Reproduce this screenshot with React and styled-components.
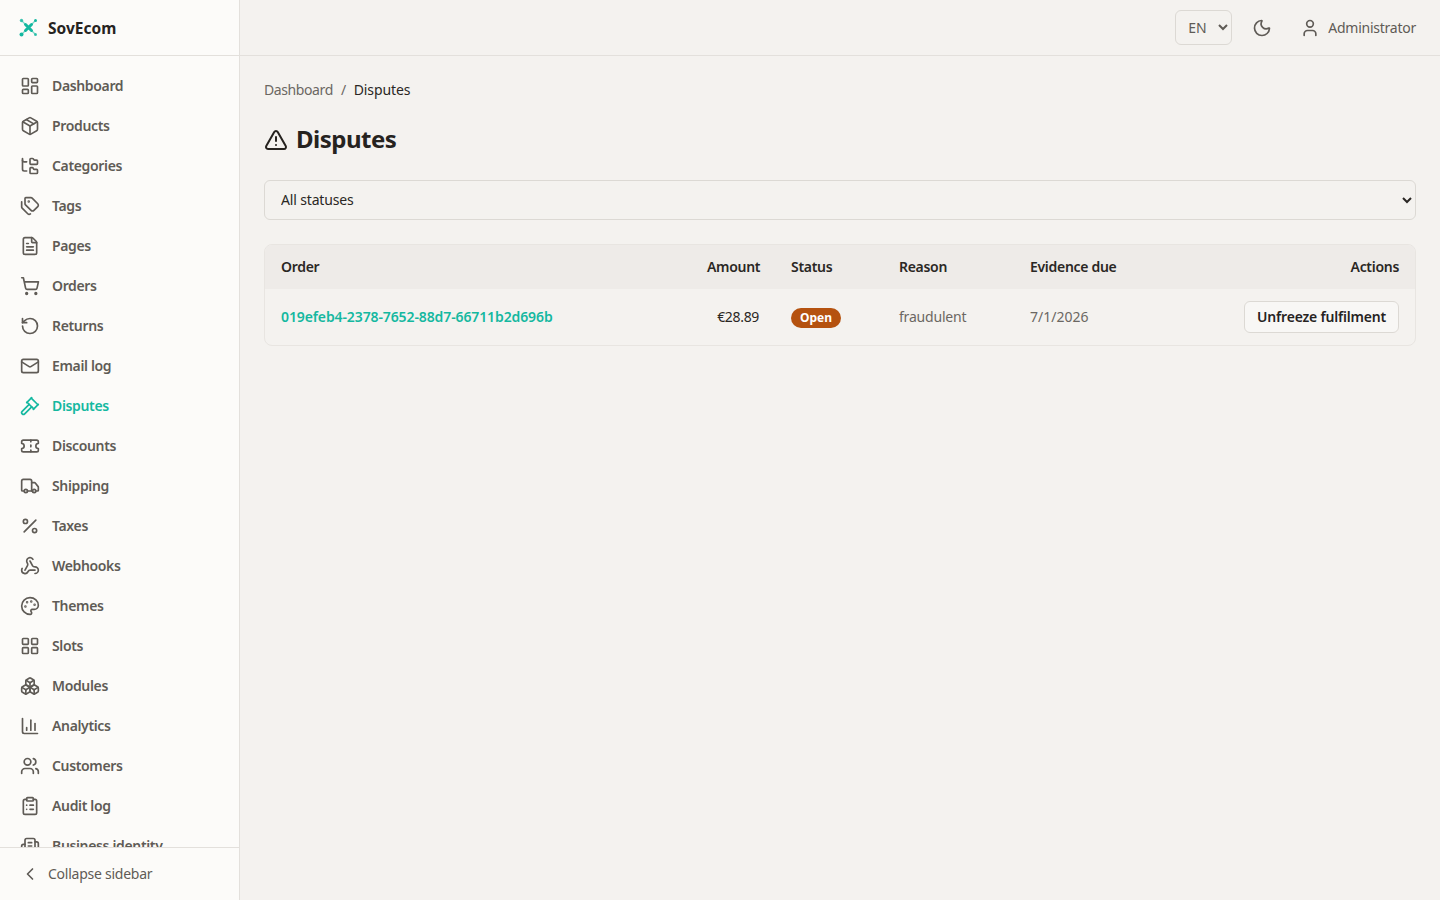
import React from 'react';
import styled, { createGlobalStyle } from 'styled-components';
import {
  LayoutDashboard, Package, FolderTree, Tags, FileText, ShoppingCart, RotateCcw, Mail, Gavel,
  Ticket, Truck, Percent, Webhook, Palette, LayoutGrid, Boxes, ChartColumn, Users,
  ClipboardList, Building2, ChevronLeft, Moon, User, TriangleAlert,
} from 'lucide-react';

const Global = createGlobalStyle`
  html, body { margin: 0; padding: 0; height: 100%; }
  body { font-family: "Noto Sans", "Open Sans", sans-serif; background: #f4f2ef; color: #2a2724; }
  * { box-sizing: border-box; }
`;

const Shell = styled.div`
  display: flex;
  height: 900px;
  overflow: hidden;
`;
const Sidebar = styled.aside`
  width: 240px;
  flex: none;
  display: flex;
  flex-direction: column;
  background: #fcfbf9;
  border-right: 1px solid #e3e0dc;
`;
const Brand = styled.div`
  height: 56px;
  flex: none;
  display: flex;
  align-items: center;
  gap: 10px;
  padding: 0 19px;
  border-bottom: 1px solid #e3e0dc;
  font-size: 15.5px;
  font-weight: 700;
  color: #26231f;
`;
const Nav = styled.nav`
  flex: 1;
  min-height: 0;
  overflow: hidden;
  padding: 10px 8px 0;
  display: flex;
  flex-direction: column;
`;
const NavItem = styled.a`
  height: 40px;
  flex: none;
  display: flex;
  align-items: center;
  gap: 12px;
  padding-left: 12px;
  font-size: 14px;
  font-weight: 600;
  letter-spacing: -0.35px;
  color: ${p => (p.$active ? '#14b8a0' : '#5f5b56')};
`;
const RaisedLabel = styled.span`
  margin-bottom: 2px;
`;
const TitleText = styled.span`
  margin-bottom: 3px;
`;
const Footer = styled.button`
  height: 53px;
  flex: none;
  display: flex;
  align-items: center;
  gap: 8px;
  padding: 0 0 0 20px;
  border: 0;
  border-top: 1px solid #e3e0dc;
  background: transparent;
  font: inherit;
  font-size: 14px;
  letter-spacing: -0.25px;
  color: #5f5b56;
  text-align: left;
`;
const Main = styled.div`
  flex: 1;
  min-width: 0;
  display: flex;
  flex-direction: column;
`;
const Topbar = styled.header`
  height: 56px;
  flex: none;
  display: flex;
  align-items: center;
  justify-content: flex-end;
  padding: 0 24px;
  border-bottom: 1px solid #e3e0dc;
`;
const LangSelect = styled.select`
  width: 57px;
  height: 35px;
  padding: 0 4px 0 8px;
  border: 1px solid #dcd9d4;
  border-radius: 6px;
  background: transparent;
  color: #5f5b56;
  font: inherit;
  font-size: 14px;
`;
const IconButton = styled.button`
  width: 36px;
  height: 36px;
  margin-left: 12px;
  padding: 0;
  border: 0;
  background: transparent;
  color: #5f5b56;
  display: flex;
  align-items: center;
  justify-content: center;
`;
const UserBlock = styled.div`
  margin-left: 20px;
  display: flex;
  align-items: center;
  gap: 8px;
  font-size: 14px;
  letter-spacing: -0.25px;
  color: #5f5b56;
`;
const Content = styled.main`
  padding: 24px;
`;
const Crumbs = styled.div`
  display: flex;
  align-items: center;
  gap: 8px;
  height: 20px;
  padding-bottom: 2px;
  font-size: 14px;
  letter-spacing: -0.4px;
  color: #6b6762;
`;
const CrumbCurrent = styled.span`
  color: #2a2724;
  letter-spacing: -0.1px;
`;
const Title = styled.h1`
  margin: 20px 0 0;
  height: 40px;
  display: flex;
  align-items: center;
  gap: 8px;
  font-size: 24px;
  font-weight: 700;
  letter-spacing: -0.5px;
  color: #26231f;
`;
const FilterSelect = styled.select`
  display: block;
  width: 100%;
  height: 40px;
  margin-top: 20px;
  padding: 0 12px 2px;
  border: 1px solid #dcd9d4;
  border-radius: 6px;
  background: transparent;
  color: #2a2724;
  font: inherit;
  font-size: 14px;
  letter-spacing: -0.15px;
`;
const Card = styled.div`
  margin-top: 24px;
  border: 1px solid #e8e5e1;
  border-radius: 8px;
  overflow: hidden;
`;
const Table = styled.table`
  width: 100%;
  table-layout: fixed;
  border-collapse: collapse;
  font-size: 14px;
`;
const Th = styled.th`
  width: ${p => p.$w || 'auto'};
  height: 44px;
  padding: 0 16px 2px;
  background: #eeebe8;
  font-weight: 600;
  letter-spacing: -0.3px;
  color: #2a2724;
  text-align: ${p => p.$align || 'left'};
`;
const Td = styled.td`
  height: 56px;
  padding: 0 16px ${p => (p.$level ? '0' : '2px')};
  letter-spacing: ${p => p.$ls || '0'};
  text-align: ${p => p.$align || 'left'};
  color: ${p => (p.$muted ? '#6b6762' : '#2a2724')};
`;
const OrderLink = styled.a`
  color: #14b8a0;
  font-weight: 600;
  letter-spacing: -0.11px;
`;
const Badge = styled.span`
  display: inline-block;
  padding: 2px 9px;
  border-radius: 10px;
  background: #b5520f;
  color: #fff;
  font-size: 12px;
  font-weight: 700;
  line-height: 16px;
`;
const ActionButton = styled.button`
  height: 32px;
  padding: 0 12px 2px;
  border: 1px solid #dcd9d4;
  border-radius: 6px;
  background: #f8f7f5;
  color: #26231f;
  font: inherit;
  font-size: 14px;
  font-weight: 600;
  letter-spacing: -0.2px;
`;

const items = [
  ['Dashboard', LayoutDashboard], ['Products', Package], ['Categories', FolderTree], ['Tags', Tags],
  ['Pages', FileText], ['Orders', ShoppingCart], ['Returns', RotateCcw], ['Email log', Mail],
  ['Disputes', Gavel, true], ['Discounts', Ticket], ['Shipping', Truck], ['Taxes', Percent],
  ['Webhooks', Webhook], ['Themes', Palette], ['Slots', LayoutGrid], ['Modules', Boxes],
  ['Analytics', ChartColumn], ['Customers', Users], ['Audit log', ClipboardList], ['Business identity', Building2],
];

const Logo = () => (
  <svg width="19" height="19" viewBox="0 0 19 19" fill="none" strokeLinecap="round">
    <path d="M2.5 2.5 16.5 16.5M16.5 2.5 2.5 16.5" stroke="#14b8a0" strokeOpacity=".55" strokeWidth="1.4" />
    <path d="M6.5 6.5 12.5 12.5M12.5 6.5 6.5 12.5" stroke="#14b8a0" strokeWidth="3" />
    <circle cx="2.5" cy="2.5" r="1.7" fill="#14b8a0" fillOpacity=".8" />
    <circle cx="16.5" cy="2.5" r="1.5" fill="#14b8a0" />
    <circle cx="2.5" cy="16.5" r="2" fill="#14b8a0" />
    <circle cx="16.5" cy="16.5" r="1.5" fill="#14b8a0" fillOpacity=".8" />
  </svg>
);

export default function App() {
  return (
    <Shell>
      <Global />
      <Sidebar>
        <Brand><Logo />SovEcom</Brand>
        <Nav>
          {items.map(([label, Icon, active]) => (
            <NavItem key={label} $active={active}>
              <Icon size={20} />
              <RaisedLabel>{label}</RaisedLabel>
            </NavItem>
          ))}
        </Nav>
        <Footer><ChevronLeft size={20} /><RaisedLabel>Collapse sidebar</RaisedLabel></Footer>
      </Sidebar>
      <Main>
        <Topbar>
          <LangSelect defaultValue="EN"><option>EN</option></LangSelect>
          <IconButton><Moon size={20} /></IconButton>
          <UserBlock><User size={20} />Administrator</UserBlock>
        </Topbar>
        <Content>
          <Crumbs>Dashboard<span>/</span><CrumbCurrent>Disputes</CrumbCurrent></Crumbs>
          <Title><TriangleAlert size={24} /><TitleText>Disputes</TitleText></Title>
          <FilterSelect defaultValue="all"><option value="all">All statuses</option></FilterSelect>
          <Card>
            <Table>
              <thead>
                <tr>
                  <Th $w="426px">Order</Th>
                  <Th $w="84px" $align="right">Amount</Th>
                  <Th $w="108px">Status</Th>
                  <Th $w="131px">Reason</Th>
                  <Th $w="200px">Evidence due</Th>
                  <Th $align="right">Actions</Th>
                </tr>
              </thead>
              <tbody>
                <tr>
                  <Td><OrderLink>019efeb4-2378-7652-88d7-66711b2d696b</OrderLink></Td>
                  <Td $align="right" $ls="-0.33px">€28.89</Td>
                  <Td $level><Badge>Open</Badge></Td>
                  <Td $muted $ls="-0.2px">fraudulent</Td>
                  <Td $muted>7/1/2026</Td>
                  <Td $level $align="right"><ActionButton>Unfreeze fulfilment</ActionButton></Td>
                </tr>
              </tbody>
            </Table>
          </Card>
        </Content>
      </Main>
    </Shell>
  );
}
